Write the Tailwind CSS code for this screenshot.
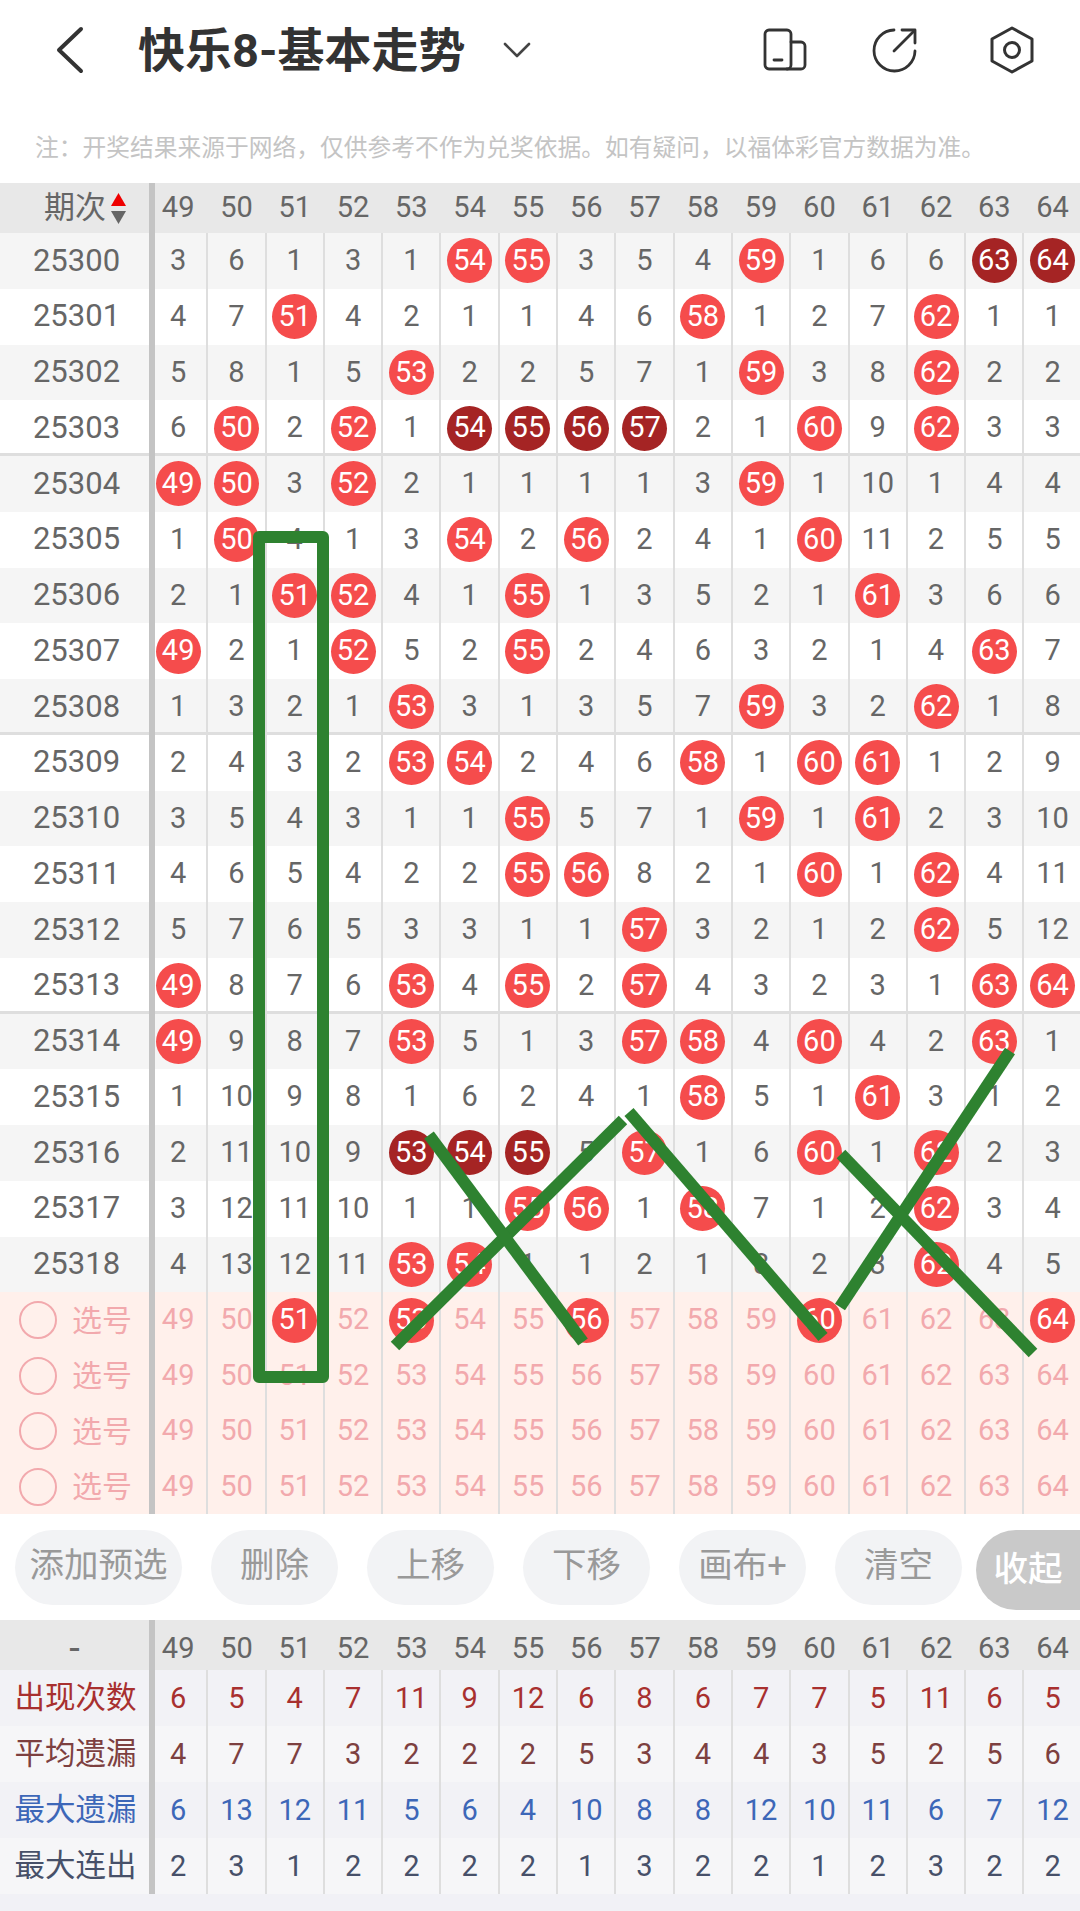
<!DOCTYPE html>
<html lang="zh-CN">
<head>
    <meta charset="UTF-8">
    <meta name="viewport" content="width=device-width, initial-scale=1.0">
    <title>快乐8-基本走势</title>
    <script src="https://cdn.jsdelivr.net/npm/@tailwindcss/browser@4"></script>
</head>
<body class="bg-white font-['Roboto','Noto_Sans_CJK_SC',sans-serif]">
<div class="relative w-[1080px] h-[1911px] overflow-hidden bg-white">
    <!-- top bar -->
    <div class="relative flex items-center h-[100px] text-[#333]">
        <svg class="ml-[55px] w-[30px] h-[48px]" viewBox="0 0 30 48" fill="none" stroke="#333" stroke-width="4" stroke-linecap="round" stroke-linejoin="round"><path d="M26 3 L4 24 L26 45"/></svg>
        <h1 class="ml-[53px] text-[47px] font-bold leading-none">快乐8-基本走势</h1>
        <svg class="ml-[36px] w-[30px] h-[18px]" viewBox="0 0 30 18" fill="none" stroke="#444" stroke-width="2.6" stroke-linecap="round" stroke-linejoin="round"><path d="M3 3 L15 15 L27 3"/></svg>
        <div class="ml-auto mr-[45px] flex items-center">
            <svg class="w-[44px] h-[44px]" viewBox="0 0 44 44" fill="none" stroke="#333" stroke-width="2.8" stroke-linecap="round"><rect x="2" y="2" width="26" height="39" rx="4"/><path d="M28 14 H38 a4 4 0 0 1 4 4 V37 a4 4 0 0 1 -4 4 H24"/><path d="M11 32 H19"/></svg>
            <svg class="ml-[65px] w-[46px] h-[46px]" viewBox="0 0 46 46" fill="none" stroke="#333" stroke-width="2.8" stroke-linecap="round" stroke-linejoin="round"><path d="M22 3 A20.5 20.5 0 1 0 43 24"/><path d="M22 24 L41 5"/><path d="M30 3 H43 V16"/></svg>
            <svg class="ml-[71px] w-[46px] h-[48px]" viewBox="0 0 46 48" fill="none" stroke="#333" stroke-width="3" stroke-linejoin="round"><path d="M23 2 L43 13 V35 L23 46 L3 35 V13 Z"/><circle cx="23" cy="24" r="7.5"/></svg>
        </div>
    </div>
    <!-- disclaimer -->
    <p class="h-[83px] pl-[35px] pt-[36px] text-[23.75px] leading-[24px] text-[#c4c4c4]">注：开奖结果来源于网络，仅供参考不作为兑奖依据。如有疑问，以福体彩官方数据为准。</p>

    <!-- trend table -->
    <div id="trend"></div>

    <!-- action buttons -->
    <div class="relative flex items-start h-[106px] pt-[16px] pl-[15px] text-[34.5px] text-[#999]">
        <button class="w-[167px] h-[75px] pb-[4px] rounded-[38px] bg-[#f2f3f5]">添加预选</button>
        <button class="ml-[29px] w-[127px] h-[75px] pb-[4px] rounded-[38px] bg-[#f2f3f5]">删除</button>
        <button class="ml-[29px] w-[127px] h-[75px] pb-[4px] rounded-[38px] bg-[#f2f3f5]">上移</button>
        <button class="ml-[29px] w-[127px] h-[75px] pb-[4px] rounded-[38px] bg-[#f2f3f5]">下移</button>
        <button class="ml-[29px] w-[127px] h-[75px] pb-[4px] rounded-[38px] bg-[#f2f3f5]">画布+</button>
        <button class="ml-[29px] w-[127px] h-[75px] pb-[4px] rounded-[38px] bg-[#f2f3f5]">清空</button>
        <button class="ml-[14px] w-[104px] h-[80px] rounded-l-[40px] bg-[#c9c9c9] text-white font-medium">收起</button>
    </div>

    <!-- stats table -->
    <div id="stats"></div>
    <div class="h-[30px] bg-[#f1f1f6]"></div>

    <!-- hand-drawn marks -->
    <svg class="absolute inset-0 w-[1080px] h-[1911px] pointer-events-none" viewBox="0 0 1080 1911" fill="none" stroke="#2e8230" stroke-width="12">
        <rect x="259" y="537" width="64" height="840" stroke-linejoin="round"/>
        <path d="M395 1346 L623 1120"/>
        <path d="M429 1135 L583 1342"/>
        <path d="M629 1112 L823 1337"/>
        <path d="M840 1307 L1010 1051"/>
        <path d="M841 1154 L1033 1353"/>
    </svg>
</div>

<script>
    // plain number = miss count, negative = red ball, over 100 = dark ball (value - 100)
    const first = 25300;
    const rows = [
        [3,6,1,3,1,-54,-55,3,5,4,-59,1,6,6,163,164],
        [4,7,-51,4,2,1,1,4,6,-58,1,2,7,-62,1,1],
        [5,8,1,5,-53,2,2,5,7,1,-59,3,8,-62,2,2],
        [6,-50,2,-52,1,154,155,156,157,2,1,-60,9,-62,3,3],
        [-49,-50,3,-52,2,1,1,1,1,3,-59,1,10,1,4,4],
        [1,-50,4,1,3,-54,2,-56,2,4,1,-60,11,2,5,5],
        [2,1,-51,-52,4,1,-55,1,3,5,2,1,-61,3,6,6],
        [-49,2,1,-52,5,2,-55,2,4,6,3,2,1,4,-63,7],
        [1,3,2,1,-53,3,1,3,5,7,-59,3,2,-62,1,8],
        [2,4,3,2,-53,-54,2,4,6,-58,1,-60,-61,1,2,9],
        [3,5,4,3,1,1,-55,5,7,1,-59,1,-61,2,3,10],
        [4,6,5,4,2,2,-55,-56,8,2,1,-60,1,-62,4,11],
        [5,7,6,5,3,3,1,1,-57,3,2,1,2,-62,5,12],
        [-49,8,7,6,-53,4,-55,2,-57,4,3,2,3,1,-63,-64],
        [-49,9,8,7,-53,5,1,3,-57,-58,4,-60,4,2,-63,1],
        [1,10,9,8,1,6,2,4,1,-58,5,1,-61,3,1,2],
        [2,11,10,9,153,154,155,5,-57,1,6,-60,1,-62,2,3],
        [3,12,11,10,1,1,-55,-56,1,-58,7,1,2,-62,3,4],
        [4,13,12,11,-53,-54,1,1,2,1,8,2,3,-62,4,5],
    ];
    const picked = [[51,53,56,60,64],[],[],[]];
    const stats = [
        ['出现次数','text-[#a8302f]','bg-[#f2f2f6]',[6,5,4,7,11,9,12,6,8,6,7,7,5,11,6,5]],
        ['平均遗漏','text-[#7d4040]','bg-[#f6f6f8]',[4,7,7,3,2,2,2,5,3,4,4,3,5,2,5,6]],
        ['最大遗漏','text-[#3d67b8]','bg-[#f2f2f6]',[6,13,12,11,5,6,4,10,8,8,12,10,11,6,7,12]],
        ['最大连出','text-[#475069]','bg-[#f6f6f8]',[2,3,1,2,2,2,2,1,3,2,2,1,2,3,2,2]],
    ];
    const nums = Array.from({length: 16}, (_, i) => 49 + i);

    const grid = 'grid grid-cols-[149px_repeat(16,58.3px)] w-[1082px]';
    const nameCell = 'flex items-center justify-center shadow-[6px_0_0_#c4c4c4]';
    const cell = 'flex items-center justify-center text-[29px] shadow-[1px_0_0_#dedede,inset_-1px_0_0_#dedede]';
    const ball = 'flex items-center justify-center w-[45px] h-[45px] rounded-full bg-[#f54c4c] text-white';
    const darkBall = 'flex items-center justify-center w-[45px] h-[45px] rounded-full bg-[#a52424] text-white';

    function headerRow(label) {
        return `<div class="${grid} h-[50px] bg-[#e8e8e8] text-[#666]">
            <div class="${nameCell}">${label}</div>
            ${nums.map(n => `<div class="flex items-center justify-center text-[29px]">${n}</div>`).join('')}
        </div>`;
    }

    function numberRow(label, values, i) {
        const line = i % 5 === 3 && i < 18 ? 'shadow-[inset_0_-3px_0_#dedede]' : '';
        const bg = i % 2 === 0 ? 'bg-[#f5f5f5]' : 'bg-white';
        return `<div class="${grid} h-[55.75px] ${bg} ${line} text-[#666]">
            <div class="${nameCell} pl-[4px] text-[31px]">${label}</div>
            ${values.map(v => {
                if (v < 0) return `<div class="${cell}"><span class="${ball}">${-v}</span></div>`;
                if (v > 100) return `<div class="${cell}"><span class="${darkBall}">${v - 100}</span></div>`;
                return `<div class="${cell}">${v}</div>`;
            }).join('')}
        </div>`;
    }

    function pickRow(on) {
        return `<div class="${grid} h-[55.5px] bg-[#fff0eb] text-[#f2a9ad]">
            <div class="${nameCell} pl-[2px] text-[30px]">
                <span class="mr-[15px] w-[38px] h-[38px] rounded-full border-2 border-[#f2a9ad]"></span>选号
            </div>
            ${nums.map(n => `<div class="${cell}">${on.includes(n) ? `<span class="${ball}">${n}</span>` : n}</div>`).join('')}
        </div>`;
    }

    function statRow([label, color, bg, values]) {
        return `<div class="${grid} h-[56px] ${bg} ${color}">
            <div class="${nameCell} pl-[2px] text-[30.5px]">${label}</div>
            ${values.map(v => `<div class="${cell}">${v}</div>`).join('')}
        </div>`;
    }

    const sortLabel = `<span class="pl-[21px] flex items-center text-[31px]">期次<span class="ml-[5px] flex flex-col gap-[5px]">
        <svg class="w-[15px] h-[13px]" viewBox="0 0 15 13"><path d="M7.5 0 L15 13 H0 Z" fill="#ee0000"/></svg>
        <svg class="w-[15px] h-[13px]" viewBox="0 0 15 13"><path d="M0 0 H15 L7.5 13 Z" fill="#666"/></svg>
    </span></span>`;

    document.getElementById('trend').innerHTML = headerRow(sortLabel)
        + rows.map((r, i) => numberRow(first + i, r, i)).join('')
        + picked.map(pickRow).join('');
    document.getElementById('stats').innerHTML = headerRow('<span class="text-[38px]">-</span>') + stats.map(statRow).join('');
</script>
</body>
</html>
